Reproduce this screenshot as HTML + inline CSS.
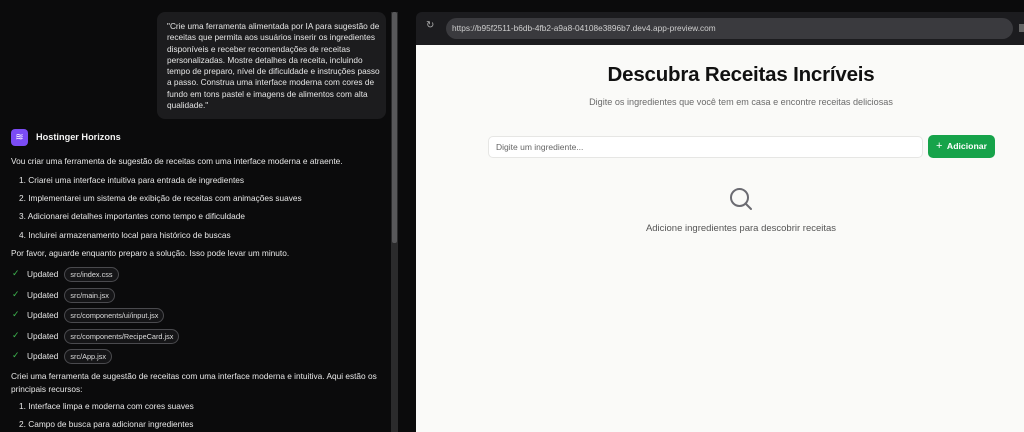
<!DOCTYPE html>
<html><head><meta charset="utf-8"><style>
*{margin:0;padding:0;box-sizing:border-box}
body{width:1024px;height:432px;overflow:hidden;background:#0b0b0c;font-family:"Liberation Sans",sans-serif;position:relative}
.l{position:absolute;color:#e8e8e8;font-size:8.3px;white-space:nowrap}
.bubble{position:absolute;left:157px;top:12px;width:229px;height:107px;background:#1c1c1e;border-radius:8px;padding:9px 10px;color:#e6e6e6;font-size:8.3px;line-height:11.3px;white-space:nowrap}
.pill{display:inline-block;border:1px solid #4a4a4e;border-radius:8px;padding:2px 5px;font-size:7.3px;color:#ddd;margin-left:6px;background:#151517}
.chk{position:absolute;left:12px;color:#3fb950;font-size:9px}
</style></head><body>
<div class="bubble">"Crie uma ferramenta alimentada por IA para sugestão de<br>receitas que permita aos usuários inserir os ingredientes<br>disponíveis e receber recomendações de receitas<br>personalizadas. Mostre detalhes da receita, incluindo<br>tempo de preparo, nível de dificuldade e instruções passo<br>a passo. Construa uma interface moderna com cores de<br>fundo em tons pastel e imagens de alimentos com alta<br>qualidade."</div>
<div style="position:absolute;left:11px;top:129px;width:17px;height:17px;background:#7b4cf5;border-radius:4px;color:#fff;font-size:10px;text-align:center;line-height:17px">≋</div>
<div class="l" style="left:36px;top:132px;font-weight:bold;font-size:9.2px;color:#f2f2f2">Hostinger Horizons</div>
<div class="l" style="left:11px;top:156px">Vou criar uma ferramenta de sugestão de receitas com uma interface moderna e atraente.</div>
<div class="l" style="left:19px;top:175px">1. Criarei uma interface intuitiva para entrada de ingredientes</div>
<div class="l" style="left:19px;top:193px">2. Implementarei um sistema de exibição de receitas com animações suaves</div>
<div class="l" style="left:19px;top:211px">3. Adicionarei detalhes importantes como tempo e dificuldade</div>
<div class="l" style="left:19px;top:230px">4. Incluirei armazenamento local para histórico de buscas</div>
<div class="l" style="left:11px;top:248px">Por favor, aguarde enquanto preparo a solução. Isso pode levar um minuto.</div>
<div class="chk" style="top:268px">✓</div><div class="l" style="left:27px;top:267px">Updated<span class="pill">src/index.css</span></div>
<div class="chk" style="top:289px">✓</div><div class="l" style="left:27px;top:288px">Updated<span class="pill">src/main.jsx</span></div>
<div class="chk" style="top:309px">✓</div><div class="l" style="left:27px;top:308px">Updated<span class="pill">src/components/ui/input.jsx</span></div>
<div class="chk" style="top:330px">✓</div><div class="l" style="left:27px;top:329px">Updated<span class="pill">src/components/RecipeCard.jsx</span></div>
<div class="chk" style="top:350px">✓</div><div class="l" style="left:27px;top:349px">Updated<span class="pill">src/App.jsx</span></div>
<div class="l" style="left:11px;top:371px">Criei uma ferramenta de sugestão de receitas com uma interface moderna e intuitiva. Aqui estão os</div>
<div class="l" style="left:11px;top:384px">principais recursos:</div>
<div class="l" style="left:19px;top:401px">1. Interface limpa e moderna com cores suaves</div>
<div class="l" style="left:19px;top:419px">2. Campo de busca para adicionar ingredientes</div>
<div style="position:absolute;left:391px;top:12px;width:7px;height:420px;background:#2b2b2c"></div>
<div style="position:absolute;left:392px;top:12px;width:5px;height:231px;background:#58585a;border-radius:2px"></div>
<div style="position:absolute;left:416px;top:12px;width:608px;height:33px;background:#1c1c1f;border-radius:6px 0 0 0"></div>
<div style="position:absolute;left:426px;top:20px;color:#aaa;font-size:10px">↻</div>
<div style="position:absolute;left:446px;top:18px;width:567px;height:21px;background:#3a3a3e;border-radius:11px;color:#cfcfcf;font-size:8.3px;line-height:21px;padding-left:6px">https://b95f2511-b6db-4fb2-a9a8-04108e3896b7.dev4.app-preview.com</div>
<div style="position:absolute;left:1019px;top:24px;width:5px;height:8px;background:#666"></div>
<div style="position:absolute;left:416px;top:45px;width:608px;height:387px;background:#fafaf8"></div>
<div style="position:absolute;left:416px;top:63px;width:650px;text-align:center;font-size:20.5px;font-weight:bold;color:#111;letter-spacing:-0.2px">Descubra Receitas Incríveis</div>
<div style="position:absolute;left:416px;top:97px;width:650px;text-align:center;font-size:9.1px;color:#6b6b6b">Digite os ingredientes que você tem em casa e encontre receitas deliciosas</div>
<div style="position:absolute;left:488px;top:136px;width:435px;height:22px;background:#fff;border:1px solid #e6e6e4;border-radius:5px;font-size:8.5px;color:#666;line-height:20px;padding-left:7px">Digite um ingrediente...</div>
<div style="position:absolute;left:928px;top:135px;width:67px;height:23px;background:#16a34a;border-radius:5px;color:#fff;font-size:8.7px;font-weight:bold;line-height:23px;text-align:center"><span style="font-weight:normal;font-size:11px">+</span>&nbsp; Adicionar</div>
<svg style="position:absolute;left:728px;top:186px" width="26" height="26" viewBox="0 0 26 26"><circle cx="11.5" cy="11.5" r="8.5" fill="none" stroke="#6b6b72" stroke-width="2"/><line x1="17.5" y1="17.5" x2="23" y2="23" stroke="#6b6b72" stroke-width="2" stroke-linecap="round"/></svg>
<div style="position:absolute;left:416px;top:223px;width:650px;text-align:center;font-size:9.5px;color:#555">Adicione ingredientes para descobrir receitas</div>
</body></html>
